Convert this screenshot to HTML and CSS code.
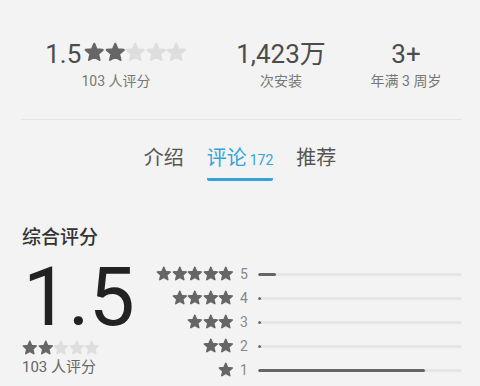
FILE: index.html
```html
<!DOCTYPE html>
<html lang="zh">
<head>
<meta charset="utf-8">
<link rel="stylesheet" href="styles.css">
</head>
<body>
<svg class="defs" width="0" height="0">
  <symbol id="star" viewBox="0 0 24 24">
    <path d="M12 17.27L18.18 21l-1.64-7.03L22 9.24l-7.19-.61L12 2 9.19 8.63 2 9.24l5.46 4.73L5.82 21z" stroke-width="2.4" stroke-linejoin="round"/>
  </symbol>
</svg>
<div class="page">
  <section class="stats">
    <div class="stat stat-rating">
      <div class="stat-value">1.5<span class="stars stars-top"><svg class="on"><use href="#star"/></svg><svg class="on"><use href="#star"/></svg><svg class="off"><use href="#star"/></svg><svg class="off"><use href="#star"/></svg><svg class="off"><use href="#star"/></svg></span></div>
      <div class="stat-label">103 人评分</div>
    </div>
    <div class="stat">
      <div class="stat-value">1,423万</div>
      <div class="stat-label">次安装</div>
    </div>
    <div class="stat">
      <div class="stat-value">3+</div>
      <div class="stat-label">年满 3 周岁</div>
    </div>
  </section>
  <div class="divider"></div>
  <nav class="tabs">
    <div class="tab">介绍</div>
    <div class="tab active">评论<span class="tab-count">172</span></div>
    <div class="tab">推荐</div>
  </nav>
  <section class="summary">
    <h2 class="summary-title">综合评分</h2>
    <div class="summary-body">
      <div class="score">
        <div class="score-value">1.5</div>
        <div class="stars stars-small"><svg class="on"><use href="#star"/></svg><svg class="on"><use href="#star"/></svg><svg class="off"><use href="#star"/></svg><svg class="off"><use href="#star"/></svg><svg class="off"><use href="#star"/></svg></div>
        <div class="score-count">103 人评分</div>
      </div>
      <div class="histogram">
        <div class="stars stars-hist"><svg class="on"><use href="#star"/></svg><svg class="on"><use href="#star"/></svg><svg class="on"><use href="#star"/></svg><svg class="on"><use href="#star"/></svg><svg class="on"><use href="#star"/></svg></div>
        <div class="hist-num">5</div>
        <div class="bar"><div class="bar-fill" style="width: 9%"></div></div>

        <div class="stars stars-hist"><svg class="on"><use href="#star"/></svg><svg class="on"><use href="#star"/></svg><svg class="on"><use href="#star"/></svg><svg class="on"><use href="#star"/></svg></div>
        <div class="hist-num">4</div>
        <div class="bar"><div class="bar-fill" style="width: 1.5%"></div></div>

        <div class="stars stars-hist"><svg class="on"><use href="#star"/></svg><svg class="on"><use href="#star"/></svg><svg class="on"><use href="#star"/></svg></div>
        <div class="hist-num">3</div>
        <div class="bar"><div class="bar-fill" style="width: 1.5%"></div></div>

        <div class="stars stars-hist"><svg class="on"><use href="#star"/></svg><svg class="on"><use href="#star"/></svg></div>
        <div class="hist-num">2</div>
        <div class="bar"><div class="bar-fill" style="width: 1.5%"></div></div>

        <div class="stars stars-hist"><svg class="on"><use href="#star"/></svg></div>
        <div class="hist-num">1</div>
        <div class="bar"><div class="bar-fill" style="width: 82%"></div></div>
      </div>
    </div>
  </section>
</div>
</body>
</html>
```

FILE: styles.css
```css
html, body {
  margin: 0;
  padding: 0;
  background: #f3f3f3;
}
body {
  font-family: Roboto, "Noto Sans CJK SC", sans-serif;
  width: 480px;
  height: 386px;
  overflow: hidden;
}
.defs {
  position: absolute;
  width: 0;
  height: 0;
}
.page {
  padding-top: 39px;
}

/* stats */
.stats {
  display: grid;
  grid-template-columns: 144px 186px 64px;
  padding-left: 44px;
}
.stat {
  display: flex;
  flex-direction: column;
  align-items: center;
}
.stat-value {
  display: flex;
  align-items: center;
  font-size: 26px;
  line-height: 30px;
  color: #4c4c4c;
}
.stat-label {
  margin-top: 4px;
  font-size: 14px;
  line-height: 16px;
  color: #777;
  white-space: nowrap;
}

.stars {
  display: flex;
}
.stars svg {
  display: block;
}
.stars svg.on { fill: #666; stroke: #666; }
.stars svg.off { fill: #dedede; stroke: #dedede; }
.stars-top {
  margin-left: 3px;
  margin-top: -3px;
}
.stars-top svg {
  width: 20.5px;
  height: 20.5px;
}

.divider {
  height: 1px;
  background: #e4e4e4;
  margin: 30px 18px 0 21px;
}

/* tabs */
.tabs {
  display: flex;
  justify-content: center;
  gap: 23px;
  margin-top: 26px;
}
.tab {
  font-size: 20px;
  line-height: 24px;
  color: #555;
  padding-bottom: 6px;
  border-bottom: 3px solid transparent;
}
.tab.active {
  color: #33a3dc;
  border-bottom-color: #33a3dc;
  border-radius: 0 0 2px 2px;
}
.tab-count {
  font-size: 14px;
  margin-left: 3px;
}

/* summary */
.summary {
  margin-top: 45px;
  padding: 0 18px 0 22px;
}
.summary-title {
  margin: 0;
  font-size: 19px;
  line-height: 24px;
  font-weight: 500;
  color: #333;
}
.summary-body {
  display: flex;
  margin-top: 8px;
}
.score {
  width: 134px;
  flex: none;
}
.score-value {
  font-size: 82px;
  line-height: 82px;
  color: #222;
  letter-spacing: -1px;
  margin-left: 1px;
  margin-top: -2px;
}
.stars-small {
  margin-top: 2px;
}
.stars-small svg {
  width: 15.6px;
  height: 15.6px;
}
.score-count {
  margin-top: 1px;
  font-size: 15px;
  line-height: 20px;
  color: #666;
}

.histogram {
  flex: 1;
  display: grid;
  grid-template-columns: 78px 8px 1fr;
  grid-auto-rows: 24px;
  column-gap: 6px;
  align-items: center;
  padding-top: 4px;
}
.stars-hist {
  justify-content: flex-end;
}
.stars-hist svg {
  width: 15.6px;
  height: 15.6px;
}
.hist-num {
  font-size: 14px;
  line-height: 16px;
  color: #888;
  text-align: center;
}
.bar {
  margin-left: 4px;
  height: 3px;
  border-radius: 2px;
  background: #e6e6e6;
  overflow: hidden;
}
.bar-fill {
  height: 100%;
  background: #666;
  border-radius: 2px;
}
```
